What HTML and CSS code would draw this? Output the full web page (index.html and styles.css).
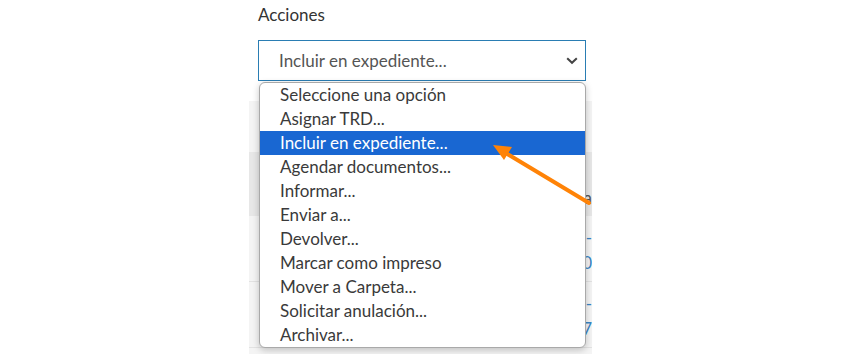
FILE: index.html
```html
<!DOCTYPE html>
<html lang="es">
<head>
<meta charset="utf-8">
<title>Acciones</title>
<link rel="stylesheet" href="styles.css">
</head>
<body>
<div class="page">
  <div class="lbl">Acciones</div>
  <div class="select">
    <span class="select-text">Incluir en expediente...</span>
    <svg class="chev" width="12" height="8" viewBox="0 0 12 8"><path d="M1.2 1.2 L6 5.8 L10.8 1.2" fill="none" stroke="#444" stroke-width="2"/></svg>
  </div>
  <div class="panel">
    <div class="panel-top"></div>
    <div class="thead"><span class="clip">na</span></div>
    <div class="row">
      <span class="clip link">4-</span>
      <span class="clip link">0</span>
    </div>
    <div class="row">
      <span class="clip link">4-</span>
      <span class="clip link">7</span>
    </div>
  </div>
</div>

<ul class="menu">
  <li>Seleccione una opción</li>
  <li>Asignar TRD...</li>
  <li class="sel">Incluir en expediente...</li>
  <li>Agendar documentos...</li>
  <li>Informar...</li>
  <li>Enviar a...</li>
  <li>Devolver...</li>
  <li>Marcar como impreso</li>
  <li>Mover a Carpeta...</li>
  <li>Solicitar anulación...</li>
  <li>Archivar...</li>
</ul>

<svg class="arrow" width="860" height="354" viewBox="0 0 860 354">
  <line x1="589" y1="203" x2="504" y2="152" stroke="#ff8307" stroke-width="4" stroke-linecap="round"/>
  <polygon points="493,145 512,147 504,160" fill="#ff8307"/>
</svg>
</body>
</html>
```

FILE: styles.css
```css
html, body {
  margin: 0;
  padding: 0;
  background: #ffffff;
}
body {
  width: 860px;
  height: 354px;
  overflow: hidden;
  position: relative;
  font-family: Lato, "Open Sans", sans-serif;
  font-size: 17px;
  color: #333;
}
.page {
  padding: 5px 0 0 258px;
}
.lbl {
  height: 20px;
  line-height: 20px;
  color: #333;
}
.select {
  margin-top: 15px;
  width: 328px;
  height: 41px;
  box-sizing: border-box;
  border: 1px solid #2a7db3;
  display: flex;
  align-items: center;
  justify-content: space-between;
  padding: 0 7px 0 20px;
  color: #555;
}
.select-text {
  line-height: 20px;
}
.chev {
  display: block;
}
.panel {
  margin-left: -9px;
  margin-top: 20px;
  width: 343px;
  background: #f4f4f4;
  overflow: hidden;
  height: 260px;
}
.panel-top {
  height: 51px;
}
.thead {
  height: 64px;
  background: #e7e7e7;
  display: flex;
  align-items: center;
  justify-content: flex-end;
  padding-top: 26px;
  box-sizing: border-box;
}
.clip {
  display: block;
  text-align: right;
  white-space: nowrap;
  color: #555;
}
.row {
  height: 66px;
  border-bottom: 1px solid #e2e2e2;
  box-sizing: border-box;
  display: flex;
  flex-direction: column;
  justify-content: center;
  gap: 4px;
  padding-top: 3px;
}
.link {
  color: #3a84c4;
  line-height: 21px;
}
.menu {
  position: absolute;
  left: 259px;
  top: 82px;
  width: 327px;
  box-sizing: border-box;
  margin: 0;
  padding: 0;
  list-style: none;
  background: #fff;
  border: 1px solid #a9a9a9;
  border-radius: 6px;
  box-shadow: 0 2px 7px rgba(0, 0, 0, 0.22);
  overflow: hidden;
}
.menu li {
  height: 24px;
  line-height: 24px;
  padding-left: 20px;
  color: #3a3a3a;
  white-space: nowrap;
}
.menu li.sel {
  background: #1967d2;
  color: #fff;
}
.arrow {
  position: absolute;
  left: 0;
  top: 0;
  pointer-events: none;
}
```
